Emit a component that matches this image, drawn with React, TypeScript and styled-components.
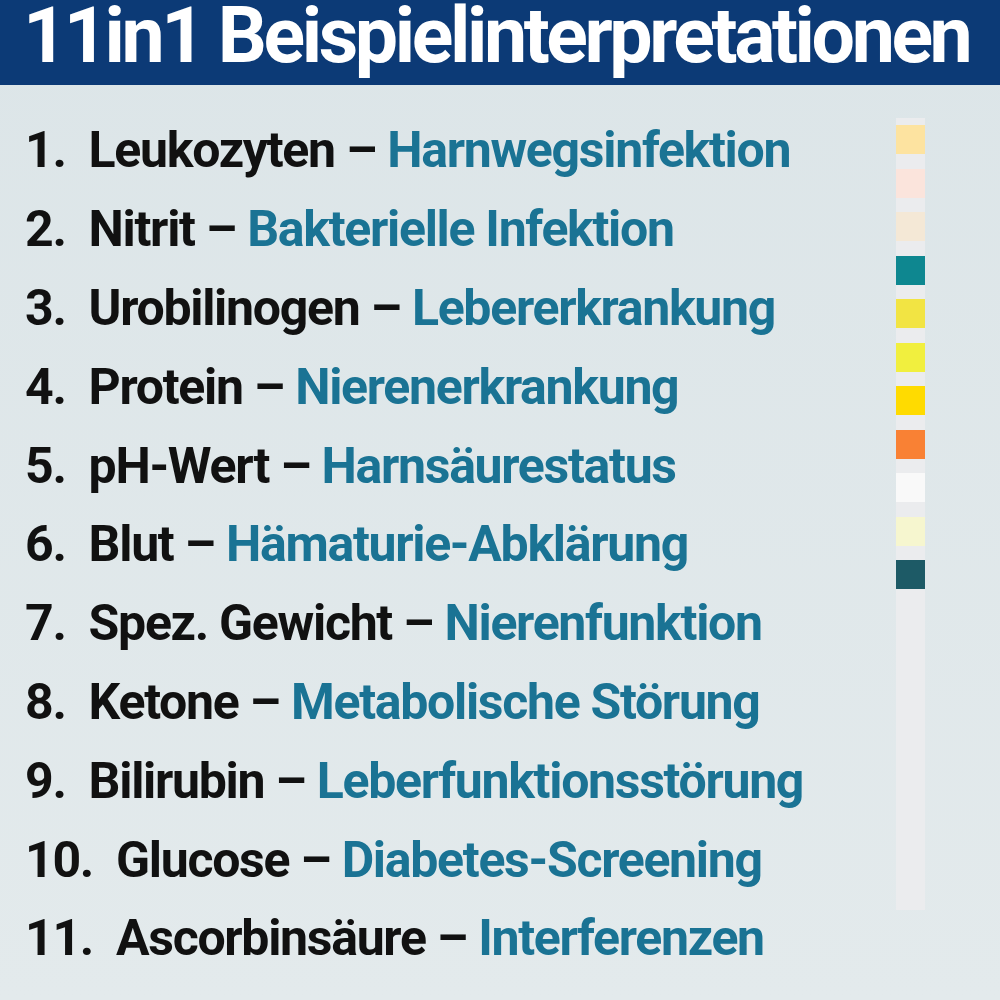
import React from 'react';
import styled, { createGlobalStyle } from 'styled-components';

const GlobalStyle = createGlobalStyle`
  html, body {
    margin: 0;
    padding: 0;
    background: #dfe7e9;
  }
  body {
    font-family: Roboto, "Liberation Sans", Arial, sans-serif;
  }
`;

const Page = styled.div`
  width: 1000px;
  height: 1000px;
  overflow: hidden;
  background: linear-gradient(180deg, #dce5e8 0%, #e3eaec 100%);
  display: flex;
  flex-direction: column;
`;

const Header = styled.header`
  height: 85px;
  background: #0c3a76;
  display: flex;
  align-items: flex-start;
  padding: 3px 0 0 23px;
  box-sizing: border-box;
  flex-shrink: 0;
`;

const Title = styled.h1`
  margin: 0;
  color: #ffffff;
  font-size: 77px;
  font-weight: 700;
  letter-spacing: -3.4px;
  line-height: 66px;
  white-space: nowrap;
`;

const Body = styled.main`
  flex: 1;
  display: flex;
  justify-content: space-between;
  padding: 26px 75px 0 25px;
`;

const List = styled.ol`
  list-style: none;
  margin: 0;
  padding: 0;
`;

const Row = styled.li`
  height: 78.8px;
  display: flex;
  align-items: center;
  font-size: 50px;
  font-weight: 700;
  letter-spacing: -1.3px;
  white-space: nowrap;
`;

const Num = styled.span`
  color: #111111;
  margin-right: 23px;
`;

const Term = styled.span`
  color: #111111;
`;

const Meaning = styled.span`
  color: #1a7394;
`;

const Strip = styled.div`
  margin-top: 7px;
  width: 29px;
  height: 792px;
  background: #ebecee;
  display: flex;
  flex-direction: column;
  gap: 14.5px;
  padding-top: 7px;
  box-sizing: border-box;
`;

const Pad = styled.div<{ $color: string }>`
  height: 29px;
  background: ${(p) => p.$color};
`;

const items: [string, string][] = [
  ['Leukozyten', 'Harnwegsinfektion'],
  ['Nitrit', 'Bakterielle Infektion'],
  ['Urobilinogen', 'Lebererkrankung'],
  ['Protein', 'Nierenerkrankung'],
  ['pH-Wert', 'Harnsäurestatus'],
  ['Blut', 'Hämaturie-Abklärung'],
  ['Spez. Gewicht', 'Nierenfunktion'],
  ['Ketone', 'Metabolische Störung'],
  ['Bilirubin', 'Leberfunktionsstörung'],
  ['Glucose', 'Diabetes-Screening'],
  ['Ascorbinsäure', 'Interferenzen'],
];

const pads = [
  '#fde3a0',
  '#fbe4dc',
  '#f4e8d6',
  '#0e8790',
  '#f2e443',
  '#f1ef3e',
  '#ffdb00',
  '#f98134',
  '#f9f9f9',
  '#f6f6cf',
  '#1d5a66',
];

const App: React.FC = () => (
  <>
    <GlobalStyle />
    <Page>
      <Header>
        <Title>11in1 Beispielinterpretationen</Title>
      </Header>
      <Body>
        <List>
          {items.map(([term, meaning], i) => (
            <Row key={term}>
              <Num>{i + 1}.</Num>
              <Term>{term} – </Term>
              <Meaning>&nbsp;{meaning}</Meaning>
            </Row>
          ))}
        </List>
        <Strip>
          {pads.map((c, i) => (
            <Pad key={i} $color={c} />
          ))}
        </Strip>
      </Body>
    </Page>
  </>
);

export default App;
